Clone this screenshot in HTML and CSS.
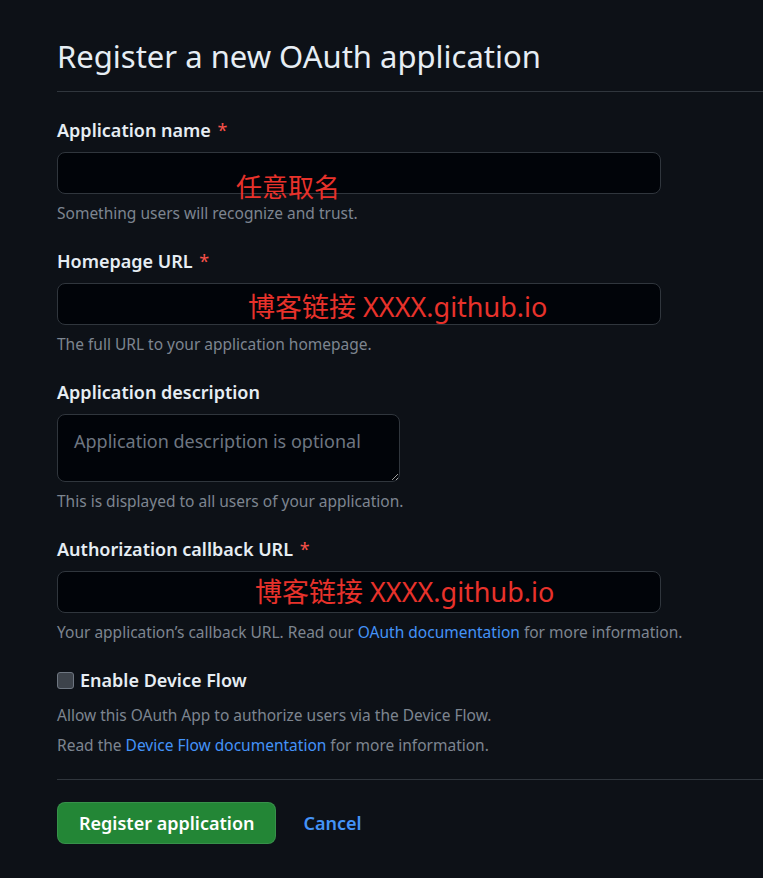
FILE: index.html
```html
<!DOCTYPE html>
<html lang="en">
<head>
<meta charset="utf-8">
<title>Register a new OAuth application</title>
<link rel="stylesheet" href="styles.css">
</head>
<body>
<main class="page">
  <h1 class="title">Register a new OAuth application</h1>
  <form class="form">
    <div class="group">
      <label class="label">Application name <span class="req">*</span></label>
      <div class="field">
        <input class="input" type="text">
        <span class="note note-1">任意取名</span>
      </div>
      <p class="hint">Something users will recognize and trust.</p>
    </div>
    <div class="group">
      <label class="label">Homepage URL <span class="req">*</span></label>
      <div class="field">
        <input class="input" type="text">
        <span class="note note-2">博客链接 XXXX.github.io</span>
      </div>
      <p class="hint">The full URL to your application homepage.</p>
    </div>
    <div class="group">
      <label class="label">Application description</label>
      <textarea class="textarea" placeholder="Application description is optional"></textarea>
      <p class="hint">This is displayed to all users of your application.</p>
    </div>
    <div class="group">
      <label class="label">Authorization callback URL <span class="req">*</span></label>
      <div class="field">
        <input class="input" type="text">
        <span class="note note-3">博客链接 XXXX.github.io</span>
      </div>
      <p class="hint">Your application’s callback URL. Read our <a class="link" href="#">OAuth documentation</a> for more information.</p>
    </div>
    <div class="group group-check">
      <label class="check-row"><span class="checkbox"></span><span class="check-label">Enable Device Flow</span></label>
      <p class="hint hint-a">Allow this OAuth App to authorize users via the Device Flow.</p>
      <p class="hint hint-b">Read the <a class="link" href="#">Device Flow documentation</a> for more information.</p>
    </div>
    <div class="actions">
      <button class="btn" type="button">Register application</button>
      <a class="cancel" href="#">Cancel</a>
    </div>
  </form>
</main>
</body>
</html>
```
FILE: styles.css
```css
html, body {
  margin: 0;
  padding: 0;
  background: #0d1117;
  color: #e6edf3;
  font-family: "Segoe UI", "Noto Sans", "Open Sans", sans-serif;
  color-scheme: dark;
  overflow: hidden;
}

.page {
  padding-left: 57px;
}

.title {
  margin: 0;
  padding-top: 36px;
  height: 55px;
  font-size: 31px;
  line-height: 40px;
  font-weight: 400;
  color: #e6edf3;
  border-bottom: 1px solid #30363d;
  box-sizing: content-box;
  padding-bottom: 0;
}

.form {
  padding-top: 26px;
}

.group {
  margin-bottom: 26px;
}

.label {
  display: block;
  font-size: 18px;
  line-height: 24px;
  font-weight: 600;
  color: #e6edf3;
  margin-bottom: 10px;
}

.req {
  color: #f85149;
  font-weight: 400;
  margin-left: 2px;
}

.field {
  position: relative;
  width: 604px;
}

.input {
  display: block;
  box-sizing: border-box;
  width: 604px;
  height: 42px;
  background: #010409;
  border: 1px solid #30363d;
  border-radius: 8px;
  color: #e6edf3;
  font: inherit;
  outline: none;
}

.textarea {
  display: block;
  box-sizing: border-box;
  width: 343px;
  height: 68px;
  background: #010409;
  border: 1px solid #30363d;
  border-radius: 8px;
  color: #e6edf3;
  font-family: inherit;
  font-size: 18px;
  line-height: 26px;
  padding: 13px 16px;
  outline: none;
}

.textarea::placeholder {
  color: #6e7681;
}

.hint {
  margin: 9px 0 0;
  font-size: 15.5px;
  line-height: 20px;
  color: #7d8590;
}

.link {
  color: #4493f8;
  text-decoration: none;
}

.note {
  position: absolute;
  color: #e8322b;
  font-family: "Segoe UI", "Noto Sans", "Noto Sans CJK SC", sans-serif;
  font-size: 27px;
  line-height: 30px;
  white-space: nowrap;
}

.note-1 { left: 179px; top: 20px; font-size: 26px; }
.note-2 { left: 191px; top: 9px; }
.note-3 { left: 198px; top: 6px; }

.group-check {
  margin-bottom: 0;
}

.check-row {
  display: flex;
  align-items: center;
  gap: 6px;
  height: 24px;
}

.checkbox {
  width: 15px;
  height: 15px;
  border: 1px solid #6e7681;
  border-radius: 3px;
  background: #3d434b;
}

.check-label {
  font-size: 18px;
  line-height: 24px;
  font-weight: 600;
  color: #e6edf3;
}

.hint-a {
  margin-top: 13px;
}

.hint-b {
  margin-top: 10px;
}

.actions {
  margin-top: 24px;
  border-top: 1px solid #30363d;
  padding-top: 22px;
  display: flex;
  align-items: center;
  gap: 27px;
}

.btn {
  height: 42px;
  padding: 0 21px;
  background: #238636;
  border: 1px solid rgba(240, 246, 252, 0.1);
  border-radius: 8px;
  color: #ffffff;
  font-family: inherit;
  font-size: 18px;
  font-weight: 600;
}

.cancel {
  color: #4493f8;
  font-size: 18px;
  font-weight: 600;
  text-decoration: none;
}
```
